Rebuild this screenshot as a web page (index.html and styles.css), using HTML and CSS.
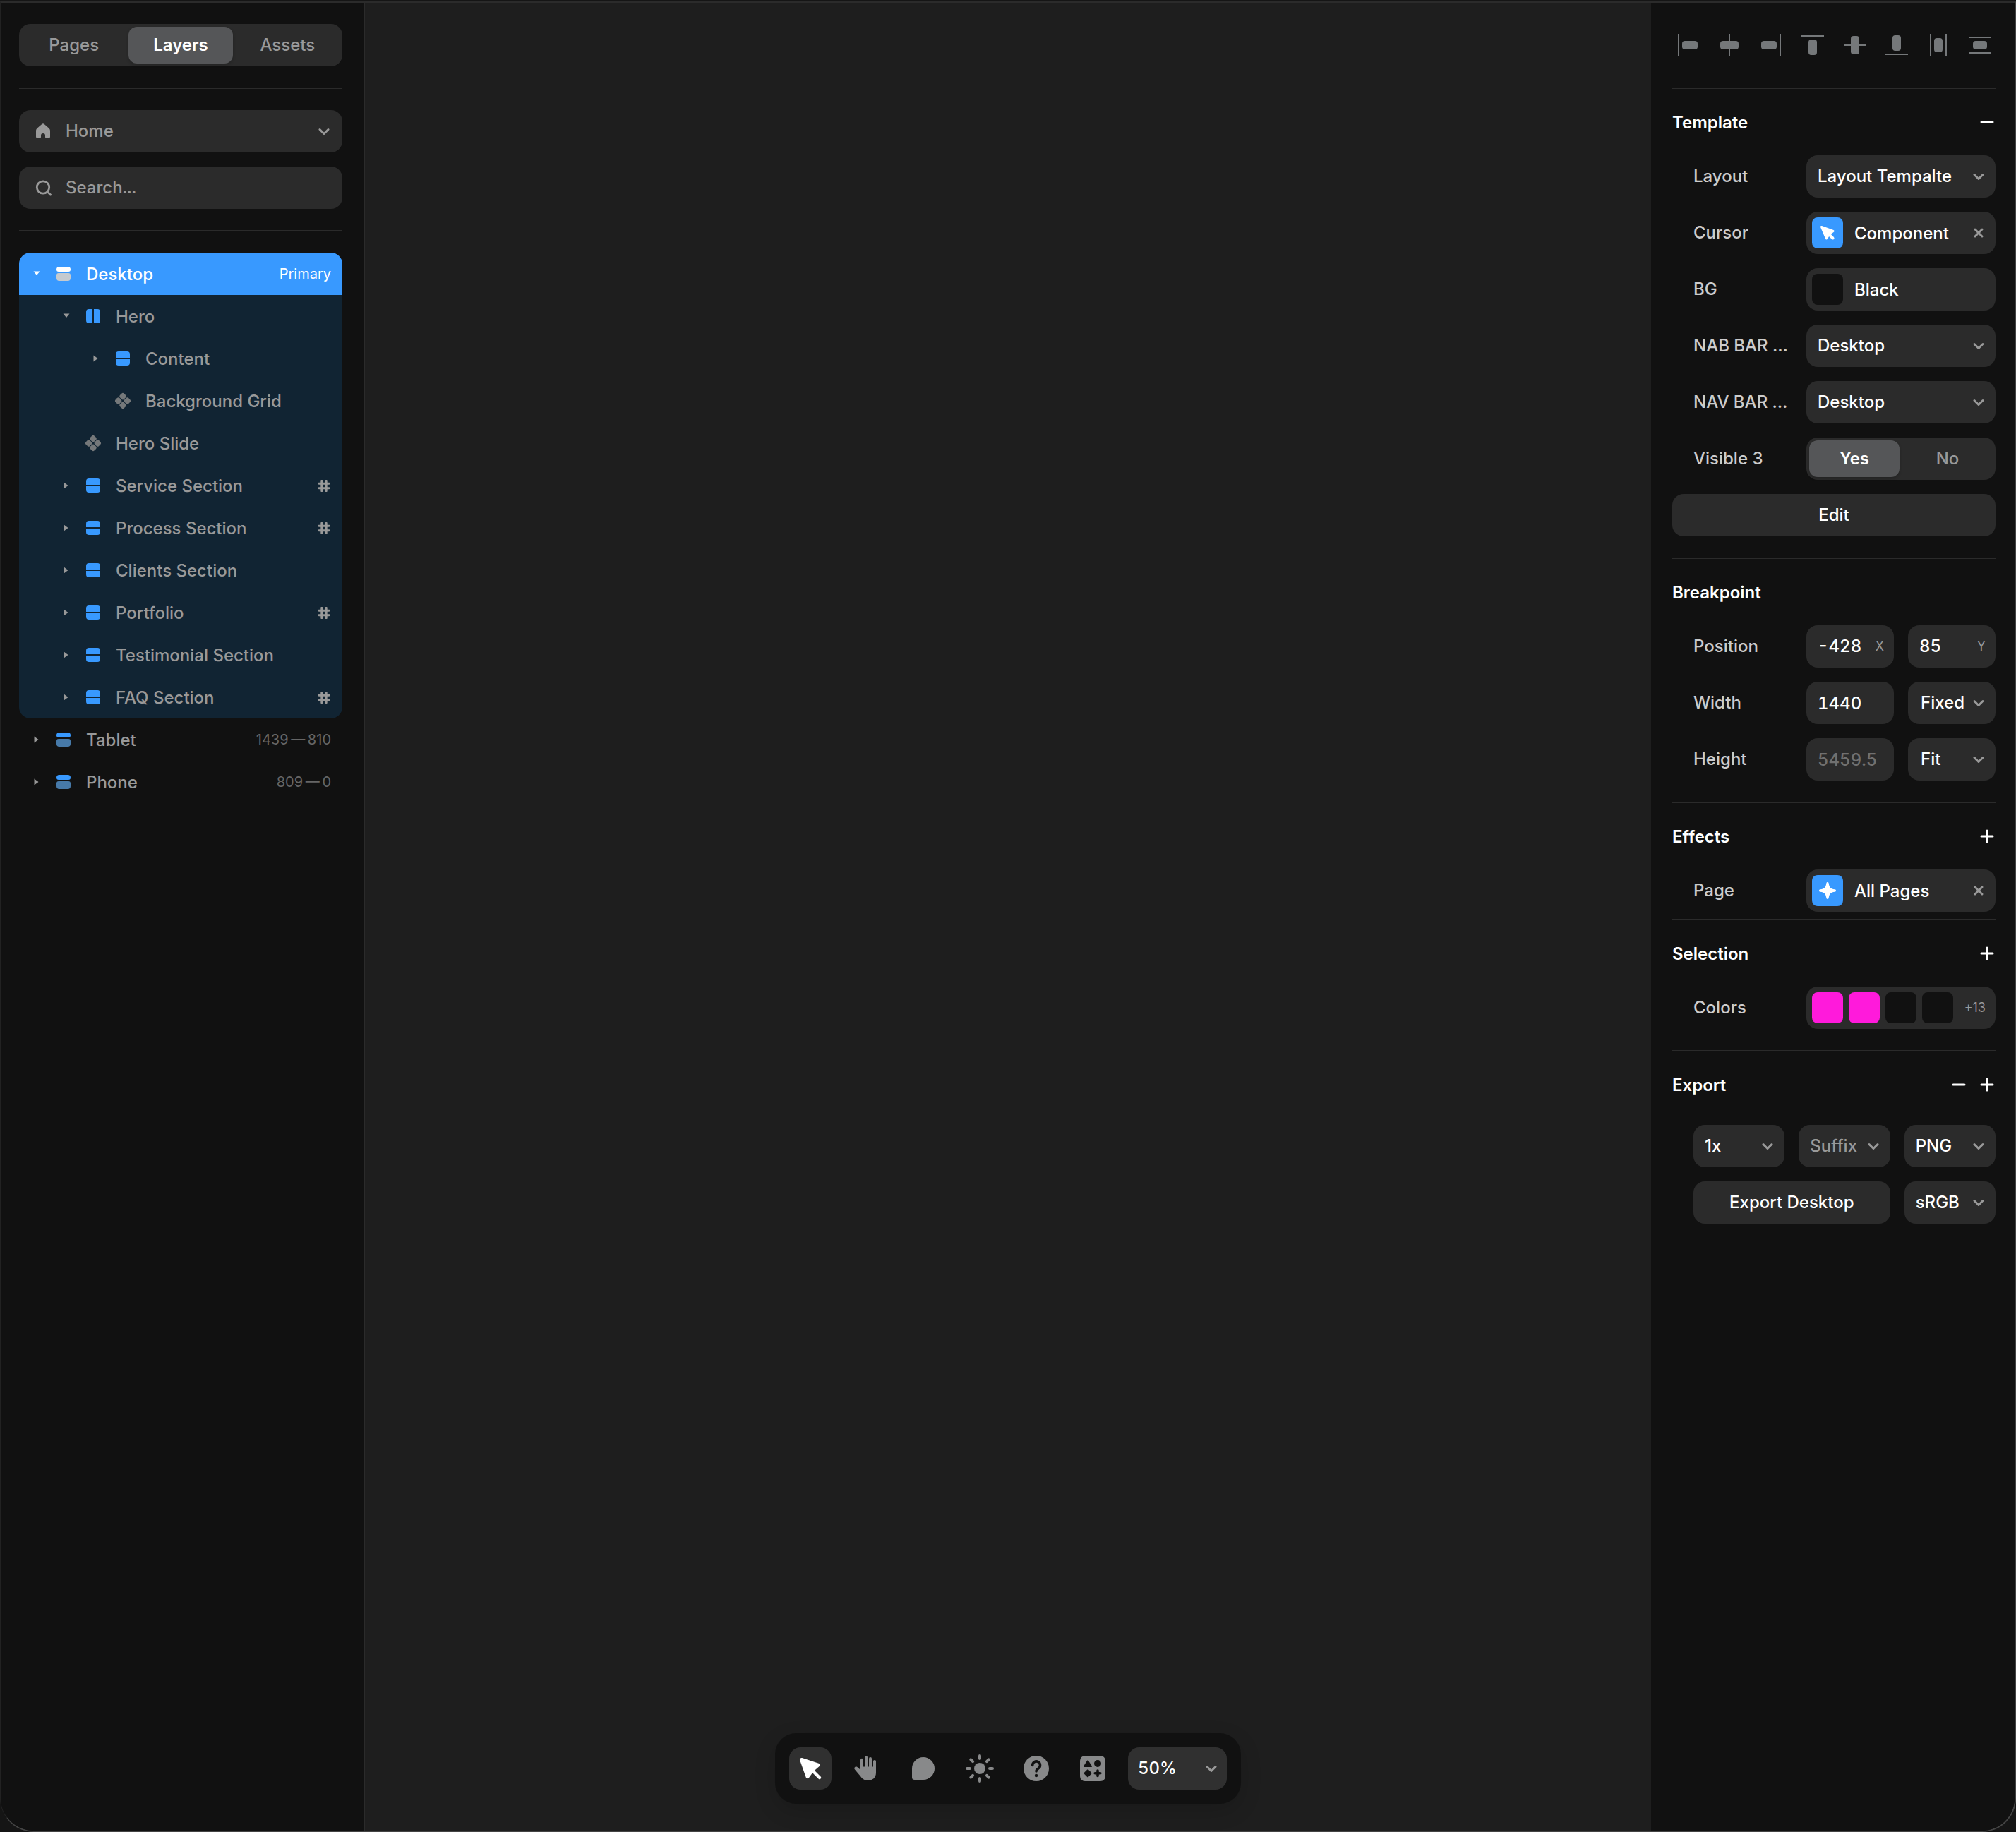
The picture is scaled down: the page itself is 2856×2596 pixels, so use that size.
FILE: index.html
```html
<!DOCTYPE html>
<html lang="en">
<head>
  <meta charset="UTF-8" />
  <meta name="viewport" content="width=device-width, initial-scale=1.0"/>
  <title>Site Editor</title>
  <link rel="stylesheet" href="styles.css">
</head>
<body>

  <!-- Shared icons -->
  <svg class="sprite" aria-hidden="true">
    <symbol id="i-right" viewBox="0 0 16 16"><path d="M4.5 3.5v9l6-4.5z"/></symbol>
    <symbol id="i-down" viewBox="0 0 16 16"><path d="M3.5 4.5h9L8 10z"/></symbol>
    <symbol id="i-rows" viewBox="0 0 24 24">
      <path d="M6 2h12a4 4 0 0 1 4 4v5H2V6a4 4 0 0 1 4-4zM2 13h20v5a4 4 0 0 1-4 4H6a4 4 0 0 1-4-4z"/>
    </symbol>
    <symbol id="i-cols" viewBox="0 0 24 24">
      <path d="M6 2h5v20H6a4 4 0 0 1-4-4V6a4 4 0 0 1 4-4zM13 2h5a4 4 0 0 1 4 4v12a4 4 0 0 1-4 4h-5z"/>
    </symbol>
    <symbol id="i-break" viewBox="0 0 24 24">
      <path d="M6 2h12a4 4 0 0 1 4 4a3 3 0 0 1-3 3H5a3 3 0 0 1-3-3a4 4 0 0 1 4-4z"/>
      <path class="dim" d="M5 11h14a3 3 0 0 1 3 3v4a4 4 0 0 1-4 4H6a4 4 0 0 1-4-4v-4a3 3 0 0 1 3-3z"/>
    </symbol>
    <symbol id="i-comp" viewBox="0 0 24 24">
      <g transform="rotate(45 12 12)">
        <rect x="3.5" y="3.5" width="8" height="8" rx="2.5"/>
        <rect x="12.5" y="3.5" width="8" height="8" rx="2.5"/>
        <rect x="3.5" y="12.5" width="8" height="8" rx="2.5"/>
        <rect x="12.5" y="12.5" width="8" height="8" rx="2.5"/>
      </g>
    </symbol>
    <symbol id="i-hash" viewBox="0 0 16 16">
      <path d="M5 1.2v13.6M11 1.2v13.6M1.2 5h13.6M1.2 11h13.6" fill="none" stroke="currentColor" stroke-width="2.8" stroke-linecap="round"/>
    </symbol>
    <symbol id="i-plus" viewBox="0 0 24 24">
      <path d="M12 4v16M4 12h16" fill="none" stroke="currentColor" stroke-width="3" stroke-linecap="round"/>
    </symbol>
    <symbol id="i-minus" viewBox="0 0 24 24">
      <path d="M4 12h16" fill="none" stroke="currentColor" stroke-width="3" stroke-linecap="round"/>
    </symbol>
    <symbol id="i-close" viewBox="0 0 16 16">
      <path d="M3 3l10 10M13 3L3 13" fill="none" stroke="currentColor" stroke-width="3" stroke-linecap="round"/>
    </symbol>
  </svg>

  <div class="app">

    <!-- Left sidebar -->
    <aside class="panel panel-left">
      <div class="block">
        <nav class="segment">
          <button type="button">Pages</button>
          <button type="button" class="active">Layers</button>
          <button type="button">Assets</button>
        </nav>
      </div>

      <div class="block">
        <div class="field with-icon">
          <svg class="field-icon" viewBox="0 0 24 24"><path d="M10.3 1.9a2.6 2.6 0 0 1 3.4 0l6.7 5.8A4.5 4.5 0 0 1 22 11v8.5A2.5 2.5 0 0 1 19.5 22h-2.8a1.7 1.7 0 0 1-1.7-1.7V18a3 3 0 0 0-6 0v2.3A1.7 1.7 0 0 1 7.3 22H4.5A2.5 2.5 0 0 1 2 19.5V11a4.5 4.5 0 0 1 1.6-3.3z"/></svg>
          <select class="muted" aria-label="Page">
            <option>Home</option>
          </select>
        </div>
        <label class="field with-icon">
          <svg class="field-icon" viewBox="0 0 24 24"><circle cx="12" cy="11.5" r="8.7" fill="none" stroke="currentColor" stroke-width="2.8"/><path d="M18.5 18l4 4" fill="none" stroke="currentColor" stroke-width="3" stroke-linecap="round"/></svg>
          <input type="text" placeholder="Search..." aria-label="Search layers">
        </label>
      </div>

      <ul class="tree">
        <li class="selected">
          <div class="row root">
            <button type="button" class="toggle" aria-label="Collapse Desktop"><svg><use href="#i-down"/></svg></button>
            <svg class="row-icon"><use href="#i-break"/></svg>
            <span class="name">Desktop</span>
            <span class="meta">Primary</span>
          </div>
          <ul>
            <li>
              <div class="row">
                <button type="button" class="toggle" aria-label="Collapse Hero"><svg><use href="#i-down"/></svg></button>
                <svg class="row-icon"><use href="#i-cols"/></svg>
                <span class="name">Hero</span>
              </div>
              <ul>
                <li class="row">
                  <button type="button" class="toggle" aria-label="Expand Content"><svg><use href="#i-right"/></svg></button>
                  <svg class="row-icon"><use href="#i-rows"/></svg>
                  <span class="name">Content</span>
                </li>
                <li class="row">
                  <span class="toggle"></span>
                  <svg class="row-icon comp"><use href="#i-comp"/></svg>
                  <span class="name">Background Grid</span>
                </li>
              </ul>
            </li>
            <li class="row">
              <span class="toggle"></span>
              <svg class="row-icon comp"><use href="#i-comp"/></svg>
              <span class="name">Hero Slide</span>
            </li>
            <li class="row">
              <button type="button" class="toggle" aria-label="Expand Service Section"><svg><use href="#i-right"/></svg></button>
              <svg class="row-icon"><use href="#i-rows"/></svg>
              <span class="name">Service Section</span>
              <svg class="hash"><use href="#i-hash"/></svg>
            </li>
            <li class="row">
              <button type="button" class="toggle" aria-label="Expand Process Section"><svg><use href="#i-right"/></svg></button>
              <svg class="row-icon"><use href="#i-rows"/></svg>
              <span class="name">Process Section</span>
              <svg class="hash"><use href="#i-hash"/></svg>
            </li>
            <li class="row">
              <button type="button" class="toggle" aria-label="Expand Clients Section"><svg><use href="#i-right"/></svg></button>
              <svg class="row-icon"><use href="#i-rows"/></svg>
              <span class="name">Clients Section</span>
            </li>
            <li class="row">
              <button type="button" class="toggle" aria-label="Expand Portfolio"><svg><use href="#i-right"/></svg></button>
              <svg class="row-icon"><use href="#i-rows"/></svg>
              <span class="name">Portfolio</span>
              <svg class="hash"><use href="#i-hash"/></svg>
            </li>
            <li class="row">
              <button type="button" class="toggle" aria-label="Expand Testimonial Section"><svg><use href="#i-right"/></svg></button>
              <svg class="row-icon"><use href="#i-rows"/></svg>
              <span class="name">Testimonial Section</span>
            </li>
            <li class="row">
              <button type="button" class="toggle" aria-label="Expand FAQ Section"><svg><use href="#i-right"/></svg></button>
              <svg class="row-icon"><use href="#i-rows"/></svg>
              <span class="name">FAQ Section</span>
              <svg class="hash"><use href="#i-hash"/></svg>
            </li>
          </ul>
        </li>
        <li class="row">
          <button type="button" class="toggle" aria-label="Expand Tablet"><svg><use href="#i-right"/></svg></button>
          <svg class="row-icon"><use href="#i-break"/></svg>
          <span class="name">Tablet</span>
          <span class="meta">1439&thinsp;—&thinsp;810</span>
        </li>
        <li class="row">
          <button type="button" class="toggle" aria-label="Expand Phone"><svg><use href="#i-right"/></svg></button>
          <svg class="row-icon"><use href="#i-break"/></svg>
          <span class="name">Phone</span>
          <span class="meta">809&thinsp;—&thinsp;0</span>
        </li>
      </ul>
    </aside>

    <!-- Canvas -->
    <main class="canvas">
      <div class="toolbar">
        <button type="button" class="tool active" aria-label="Select">
          <svg viewBox="0 0 60 60"><path d="M17.5 17.5L41 25.2L33 32L26 41.5z" stroke="currentColor" stroke-width="5" stroke-linejoin="round"/><path d="M33 33l10 10" stroke="currentColor" stroke-width="4.5" stroke-linecap="round"/></svg>
        </button>
        <button type="button" class="tool" aria-label="Hand">
          <svg viewBox="0 0 60 60"><path d="M23 32V17.8M29 32V14M35 32V16M41 34V20" fill="none" stroke="currentColor" stroke-width="4" stroke-linecap="round"/><path d="M21 27.5h22V36c0 7-5 11-11.5 11c-5 0-8-2.5-10.500-6l-8-9.500c-2-2.700 1-5 3.500-3.500l4.500 4z"/></svg>
        </button>
        <button type="button" class="tool" aria-label="Comment">
          <svg viewBox="0 0 60 60"><path d="M30 14a16 16 0 0 1 0 32H17.5a3.5 3.5 0 0 1-3.5-3.5V30a16 16 0 0 1 16-16z"/></svg>
        </button>
        <button type="button" class="tool" aria-label="Theme">
          <svg viewBox="0 0 60 60"><circle cx="30" cy="30" r="8"/><path d="M30 12v4M30 44v4M12 30h4M44 30h4M17.3 17.3l2.8 2.8M39.9 39.9l2.8 2.8M17.3 42.7l2.8-2.8M39.9 20.1l2.8-2.8" fill="none" stroke="currentColor" stroke-width="4" stroke-linecap="round"/></svg>
        </button>
        <button type="button" class="tool" aria-label="Help">
          <svg viewBox="0 0 60 60"><circle cx="30" cy="30" r="18"/><path class="cut-line" d="M24.7 25.500a5.400 5.400 0 1 1 8.200 4.500c-2 1.300-2.900 2-2.900 3.900"/><circle class="cut" cx="30" cy="40" r="2.2"/></svg>
        </button>
        <button type="button" class="tool" aria-label="Components">
          <svg viewBox="0 0 60 60"><rect x="12" y="12" width="36" height="36" rx="7"/><path class="cut" d="M22 19q1-1.5 2 0l4.800 7.500q.7 1.500-.8 1.500H18q-1.500 0-.8-1.500zM22 31.800q1-1 2 0l4 4q1 1 0 2l-4 4q-1 1-2 0l-4-4q-1-1 0-2z"/><circle class="cut" cx="37" cy="23" r="5"/><path class="cut-line" d="M37 33v7.500M33.200 36.800h7.600"/></svg>
        </button>
        <select class="field zoom" aria-label="Zoom">
          <option>50%</option>
        </select>
      </div>
    </main>

    <!-- Right sidebar -->
    <aside class="panel panel-right">
      <div class="align">
        <button type="button" aria-label="Align left"><svg viewBox="0 0 44 32"><rect x="8" y="0" width="2" height="32"/><rect x="14" y="10" width="22" height="12" rx="4"/></svg></button>
        <button type="button" aria-label="Align center"><svg viewBox="0 0 44 32"><rect x="21" y="0" width="2" height="32"/><rect x="9" y="10" width="26" height="12" rx="4"/></svg></button>
        <button type="button" aria-label="Align right"><svg viewBox="0 0 44 32"><rect x="34" y="0" width="2" height="32"/><rect x="8" y="10" width="22" height="12" rx="4"/></svg></button>
        <button type="button" aria-label="Align top"><svg viewBox="0 0 44 32"><rect x="6" y="2" width="32" height="2"/><rect x="16" y="8" width="12" height="22" rx="4"/></svg></button>
        <button type="button" aria-label="Align middle"><svg viewBox="0 0 44 32"><rect x="6" y="15" width="32" height="2"/><rect x="16" y="3" width="12" height="26" rx="4"/></svg></button>
        <button type="button" aria-label="Align bottom"><svg viewBox="0 0 44 32"><rect x="6" y="28" width="32" height="2"/><rect x="16" y="2" width="12" height="22" rx="4"/></svg></button>
        <button type="button" aria-label="Distribute horizontally"><svg viewBox="0 0 44 32"><rect x="10" y="0" width="2" height="32"/><rect x="32" y="0" width="2" height="32"/><rect x="16" y="6" width="12" height="20" rx="4"/></svg></button>
        <button type="button" aria-label="Distribute vertically"><svg viewBox="0 0 44 32"><rect x="6" y="4" width="32" height="2"/><rect x="6" y="26" width="32" height="2"/><rect x="12" y="10" width="20" height="12" rx="4"/></svg></button>
      </div>

      <section class="section">
        <header>
          <h2>Template</h2>
          <button type="button" aria-label="Remove template"><svg><use href="#i-minus"/></svg></button>
        </header>
        <div class="prop">
          <label for="layout">Layout</label>
          <select id="layout" class="field"><option>Layout Tempalte</option></select>
        </div>
        <div class="prop">
          <span class="label">Cursor</span>
          <div class="field chip">
            <span class="swatch blue"><svg viewBox="0 0 44 44"><path d="M13.5 13.5L30 19.5L24.5 23.5L20.5 30z" stroke="currentColor" stroke-width="3" stroke-linejoin="round"/><path d="M24 24l5.500 5.500" stroke="currentColor" stroke-width="4" stroke-linecap="round"/></svg></span>
            <span class="value">Component</span>
            <button type="button" class="close" aria-label="Remove cursor"><svg><use href="#i-close"/></svg></button>
          </div>
        </div>
        <div class="prop">
          <span class="label">BG</span>
          <button type="button" class="field chip">
            <span class="swatch black"></span>
            <span class="value">Black</span>
          </button>
        </div>
        <div class="prop">
          <label for="nab">NAB BAR …</label>
          <select id="nab" class="field"><option>Desktop</option></select>
        </div>
        <div class="prop">
          <label for="nav">NAV BAR …</label>
          <select id="nav" class="field"><option>Desktop</option></select>
        </div>
        <div class="prop">
          <span class="label">Visible 3</span>
          <div class="segment">
            <label><input type="radio" name="visible" checked><span>Yes</span></label>
            <label><input type="radio" name="visible"><span>No</span></label>
          </div>
        </div>
        <button type="button" class="field action">Edit</button>
      </section>

      <section class="section">
        <header><h2>Breakpoint</h2></header>
        <div class="prop">
          <span class="label">Position</span>
          <div class="pair">
            <label class="field unit"><input type="text" value="-428"><span>X</span></label>
            <label class="field unit"><input type="text" value="85"><span>Y</span></label>
          </div>
        </div>
        <div class="prop">
          <label for="width">Width</label>
          <div class="pair">
            <input type="text" id="width" class="field" value="1440">
            <select class="field" aria-label="Width mode"><option>Fixed</option></select>
          </div>
        </div>
        <div class="prop">
          <label for="height">Height</label>
          <div class="pair">
            <input type="text" id="height" class="field faded" value="5459.5">
            <select class="field" aria-label="Height mode"><option>Fit</option></select>
          </div>
        </div>
      </section>

      <section class="section tight">
        <header>
          <h2>Effects</h2>
          <button type="button" aria-label="Add effect"><svg><use href="#i-plus"/></svg></button>
        </header>
        <div class="prop">
          <span class="label">Page</span>
          <div class="field chip">
            <span class="swatch blue"><svg viewBox="0 0 44 44"><path d="M22 10c1 0 1.500.6 1.700 1.700c.8 5.800 2.800 7.800 8.600 8.600c1.100.2 1.700.7 1.700 1.700s-.6 1.500-1.700 1.700c-5.800.8-7.800 2.800-8.600 8.600c-.2 1.100-.7 1.700-1.700 1.700s-1.500-.6-1.700-1.700c-.8-5.800-2.800-7.800-8.600-8.600C10.600 23.500 10 23 10 22s.6-1.500 1.700-1.700c5.800-.8 7.800-2.800 8.600-8.600C20.500 10.600 21 10 22 10z"/></svg></span>
            <span class="value">All Pages</span>
            <button type="button" class="close" aria-label="Remove effect"><svg><use href="#i-close"/></svg></button>
          </div>
        </div>
      </section>

      <section class="section">
        <header>
          <h2>Selection</h2>
          <button type="button" aria-label="Add selection"><svg><use href="#i-plus"/></svg></button>
        </header>
        <div class="prop">
          <span class="label">Colors</span>
          <button type="button" class="field chip colors">
            <span class="swatch pink"></span>
            <span class="swatch pink"></span>
            <span class="swatch black"></span>
            <span class="swatch black"></span>
            <span class="more">+13</span>
          </button>
        </div>
      </section>

      <section class="section">
        <header>
          <h2>Export</h2>
          <button type="button" aria-label="Remove export"><svg><use href="#i-minus"/></svg></button>
          <button type="button" aria-label="Add export"><svg><use href="#i-plus"/></svg></button>
        </header>
        <div class="export">
          <select class="field" aria-label="Scale"><option>1x</option></select>
          <select class="field muted" aria-label="Suffix"><option>Suffix</option></select>
          <select class="field" aria-label="Format"><option>PNG</option></select>
          <button type="button" class="field action">Export Desktop</button>
          <select class="field" aria-label="Color profile"><option>sRGB</option></select>
        </div>
      </section>
    </aside>

  </div>
</body>
</html>
```
FILE: styles.css
```css
:root {
  --panel: #111111;
  --canvas: #1e1e1e;
  --field: #2b2b2b;
  --field-active: #555658;
  --line: #2b2b2b;
  --frame: #444444;
  --blue: #3899ff;
  --dim: #477aa9;
  --tree: #112433;
  --text: #ffffff;
  --label: #cccccc;
  --muted: #999999;
  --chevron: url("data:image/svg+xml,%3Csvg xmlns='http://www.w3.org/2000/svg' viewBox='0 0 16 16'%3E%3Cpath d='M2 5.500L8 11.500l6-6' fill='none' stroke='%23999999' stroke-width='3' stroke-linecap='round' stroke-linejoin='round'/%3E%3C/svg%3E");
}

* {
  box-sizing: border-box;
}

body {
  margin: 0;
  background: #151515;
  color: var(--text);
  font-family: Inter, sans-serif;
  font-size: 24px;
  font-weight: 500;
  font-optical-sizing: none;
  line-height: 32px;
}

button, input, select {
  margin: 0;
  padding: 0;
  border: none;
  background: none;
  color: inherit;
  font: inherit;
  font-optical-sizing: none;
  outline: none;
}

input, .zoom {
  font-variant-numeric: tabular-nums;
}

button {
  cursor: pointer;
}

svg {
  display: block;
  fill: currentColor;
}

ul {
  list-style: none;
  margin: 0;
  padding: 0;
}

.sprite {
  display: none;
}

.app {
  display: grid;
  grid-template-columns: 516px 1fr 515px;
  min-height: calc(100vh - 2px);
  margin-top: 2px;
  border: 2px solid var(--frame);
  border-top-color: var(--line);
  border-left: 1px solid #222222;
  border-radius: 0 0 48px 48px;
  overflow: hidden;
}

.panel {
  background: var(--panel);
}

.panel-left {
  padding: 0 30px 0 26px;
  border-right: 2px solid var(--line);
}

.panel-right {
  padding: 0 27px 0 30px;
}

/* Fields */

.field {
  width: 100%;
  min-width: 0;
  height: 60px;
  border-radius: 16px;
  background-color: var(--field);
}

input.field {
  padding: 0 16px;
}

select {
  appearance: none;
  width: 100%;
  height: 60px;
  padding: 0 40px 0 16px;
  background-image: var(--chevron);
  background-repeat: no-repeat;
  background-position: right 16px center;
  background-size: 16px;
}

.with-icon {
  display: flex;
  align-items: center;
  gap: 20px;
  padding-left: 22px;
  color: var(--muted);
}

.with-icon select {
  padding-left: 0;
  background-position: right 18px center;
}

.with-icon input {
  flex: 1;
  min-width: 0;
}

.field-icon {
  flex: none;
  width: 24px;
  height: 24px;
}

.muted, ::placeholder {
  color: var(--muted);
  opacity: 1;
}

.faded {
  color: #707070;
}

.segment {
  display: flex;
  gap: 4px;
  width: 100%;
  height: 60px;
  padding: 4px;
  border-radius: 16px;
  background: var(--field);
  color: var(--muted);
}

.segment button, .segment label {
  flex: 1;
  border-radius: 12px;
  line-height: 52px;
  text-align: center;
}

.segment input {
  position: absolute;
  opacity: 0;
}

.segment .active, .segment label:has(:checked) {
  background: var(--field-active);
  box-shadow: 0 2px 4px rgba(0, 0, 0, 0.2);
  color: var(--text);
  font-weight: 600;
}

/* Left sidebar */

.block {
  display: flex;
  flex-direction: column;
  gap: 20px;
  padding: 30px 0;
  border-bottom: 2px solid var(--line);
}

.tree {
  margin-top: 30px;
  color: var(--muted);
}

.row {
  display: flex;
  align-items: center;
  gap: 18px;
  height: 60px;
  padding: 0 16px 0 17px;
}

.tree ul .row {
  padding-left: 59px;
}

.tree ul ul .row {
  padding-left: 101px;
}

.selected {
  border-radius: 16px;
  background: var(--tree);
  overflow: hidden;
}

.root {
  background: var(--blue);
  color: var(--text);
}

.toggle, .toggle svg {
  width: 16px;
  height: 16px;
}

.row-icon {
  width: 24px;
  height: 24px;
  color: var(--blue);
}

.row-icon.comp {
  color: #75787a;
}

.root .row-icon {
  --dim: #c5cacf;
  color: var(--text);
}

.dim {
  fill: var(--dim);
}

.name {
  flex: 1;
  padding: 2px 0 0 2px;
}

.meta {
  color: #666666;
  font-size: 20px;
  font-weight: 400;
}

.root .meta {
  color: var(--text);
}

.hash {
  width: 20px;
  height: 17px;
}

/* Canvas */

.canvas {
  display: flex;
  justify-content: center;
  align-items: flex-end;
  padding-bottom: 38px;
  background: var(--canvas);
}

.toolbar {
  display: flex;
  gap: 20px;
  padding: 20px;
  border-radius: 30px;
  background: var(--panel);
  box-shadow: 0 10px 30px rgba(0, 0, 0, 0.15);
  color: #88898a;
}

.tool {
  width: 60px;
  height: 60px;
  border-radius: 16px;
}

.tool.active {
  background: #303030;
  color: var(--text);
}

.cut {
  fill: var(--panel);
}

.cut-line {
  fill: none;
  stroke: var(--panel);
  stroke-width: 3.6;
  stroke-linecap: round;
}

.zoom {
  width: 140px;
  padding-left: 14px;
  background-color: #303030;
  background-position: right 14px center;
  color: var(--text);
}

/* Right sidebar */

.align {
  display: flex;
  justify-content: space-between;
  padding: 44px 0;
  border-bottom: 2px solid var(--line);
  color: #75787a;
}

.align svg {
  width: 44px;
  height: 32px;
}

.section {
  display: flex;
  flex-direction: column;
  gap: 20px;
  padding-bottom: 30px;
  border-bottom: 2px solid var(--line);
}

.section.tight {
  padding-bottom: 10px;
}

.section:last-child {
  border-bottom: none;
}

.section header {
  display: flex;
  align-items: center;
  gap: 16px;
  height: 94px;
  margin-bottom: -20px;
}

.section header svg {
  width: 24px;
  height: 24px;
}

h2 {
  flex: 1;
  margin: 0;
  padding-top: 2px;
  font-size: 24px;
  font-weight: 600;
}

.prop {
  display: grid;
  grid-template-columns: 140px 1fr;
  gap: 20px;
  align-items: center;
  padding-left: 30px;
}

.prop > label, .label {
  color: var(--label);
  white-space: nowrap;
}

.chip {
  display: flex;
  align-items: center;
  gap: 8px;
  padding: 0 16px 0 8px;
  text-align: left;
}

.colors {
  padding-right: 14px;
}

.value {
  flex: 1;
  padding: 2px 0 0 8px;
}

.swatch {
  flex: none;
  width: 44px;
  height: 44px;
  border-radius: 8px;
}

.blue {
  background: var(--blue);
}

.black {
  background: var(--panel);
}

.pink {
  background: #ff1adb;
}

.close, .close svg {
  width: 16px;
  height: 16px;
  color: var(--muted);
}

.more {
  flex: 1;
  color: var(--muted);
  font-size: 18px;
  font-weight: 400;
  text-align: right;
}

.pair {
  display: grid;
  grid-template-columns: 1fr 1fr;
  gap: 20px;
}

.pair select {
  padding-left: 18px;
}

.unit {
  display: flex;
  align-items: center;
  padding: 0 14px 0 16px;
}

.unit input {
  flex: 1;
  min-width: 0;
}

.unit span {
  color: var(--muted);
  font-size: 18px;
  font-weight: 400;
}

.export {
  display: grid;
  grid-template-columns: repeat(3, 1fr);
  gap: 20px;
  padding: 10px 0 0 30px;
}

.export .action {
  grid-column: span 2;
}
```
